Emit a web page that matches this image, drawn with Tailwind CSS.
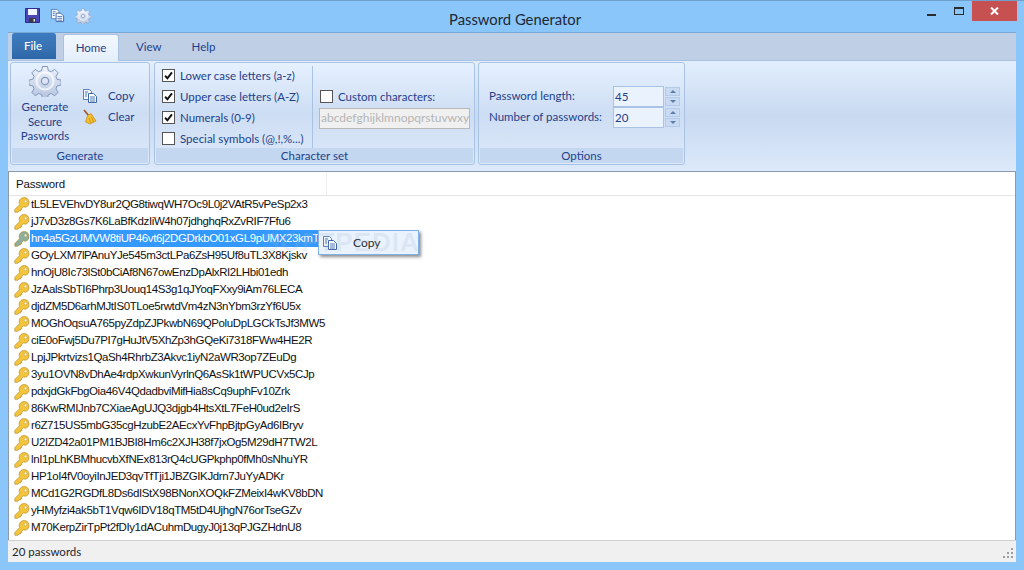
<!DOCTYPE html>
<html lang="en">
<head>
  <meta charset="UTF-8" />
  <title>Password Generator</title>
  <script src="https://cdn.jsdelivr.net/npm/@tailwindcss/browser@4"></script>
</head>
<body class="bg-[#8AC6FA]">
  <svg width="0" height="0" class="absolute">
    <defs>
      <linearGradient id="gearfill" x1="0" y1="0" x2="0" y2="1"><stop offset="0" stop-color="#EEF3FB"/><stop offset="1" stop-color="#B4C3DE"/></linearGradient>
      <symbol id="key" viewBox="0 0 18 18">
        <path d="M11.5 .6a5.6 5.6 0 0 1 1.2 11L10.6 11 8.8 12.8 8.9 14.2 7.4 14.2 7.2 15.8 5.6 15.7 4.4 17.2 1 17.2 .8 14.2 6.3 8.6A5.6 5.6 0 0 1 11.5 .6Z" fill="currentColor" stroke="#A9780F" stroke-opacity=".75" stroke-width=".8"/>
        <circle cx="13" cy="5" r="1.5" fill="#fff" fill-opacity=".85" stroke="#A9780F" stroke-opacity=".6" stroke-width=".6"/>
      </symbol>
      <symbol id="copy" viewBox="0 0 16 16">
        <path d="M1.5 1.5h6l2 2v8h-8z" fill="#F4F8FE" stroke="#5A7FB5"/>
        <path d="M6.5 5.5h5l3 3v6h-8z" fill="#FBFDFF" stroke="#3F68A8"/>
        <path d="M8 9h5M8 11h5M8 13h5M3 4h3M3 6h2M3 8h2" stroke="#4C78B8"/>
      </symbol>
      <symbol id="gear" viewBox="0 0 32 32">
        <path d="M13.5 1.5h5l.8 4 3 1.2 3.4-2.3 3.5 3.5-2.3 3.4 1.2 3 4 .8v5l-4 .8-1.2 3 2.3 3.4-3.5 3.5-3.4-2.3-3 1.2-.8 4h-5l-.8-4-3-1.2-3.4 2.3-3.5-3.5 2.3-3.4-1.2-3-4-.8v-5l4-.8 1.2-3-2.3-3.4 3.5-3.5 3.4 2.3 3-1.2z" fill="url(#gearfill)" stroke="#8296BE" stroke-width="1"/>
        <circle cx="16" cy="16" r="8.5" fill="none" stroke="#fff" stroke-opacity=".7" stroke-width="2"/>
        <circle cx="16" cy="16" r="3.6" fill="#DCE6F6" stroke="#8296BE" stroke-width="1.2"/>
      </symbol>
      <symbol id="check" viewBox="0 0 13 13">
        <path d="M2.5 6.8 5.2 9.8 10.6 2.8" fill="none" stroke="#111" stroke-width="2.3"/>
      </symbol>
    </defs>
  </svg>

  <div class="relative w-[1024px] h-[570px] overflow-hidden border-t border-[#6F9FCB] bg-[#8AC6FA] font-['Lato',sans-serif]">

    <!-- title bar -->
    <div class="relative flex items-center h-[31px]">
      <div class="flex items-center gap-[10px] pl-[25px] pb-[2px]">
        <svg width="15" height="15" viewBox="0 0 15 15">
          <path d="M.5.5h14v14H.5z" fill="#4A45B4" stroke="#2F2B86"/>
          <path d="M3 1h9v6H3z" fill="#F0F4FC"/>
          <path d="M4 10h7v4.5H4z" fill="#3B3B44"/>
          <path d="M8.5 11h1.5v2.5H8.5z" fill="#EEE"/>
        </svg>
        <svg width="15" height="15"><use href="#copy"/></svg>
        <svg width="16" height="16"><use href="#gear"/></svg>
      </div>
      <div class="absolute left-[449px] top-[8px] text-[14.8px] leading-[20px] text-[#1d2733]">Password Generator</div>
      <div class="ml-auto mr-[7px] flex items-start self-start">
        <div class="w-[9px] h-[2px] bg-[#2B2B2B] mt-[13px] mr-[18px]"></div>
        <div class="w-[10px] h-[8px] border border-t-2 border-[#2B2B2B] mt-[6px] mr-[8px]"></div>
        <div class="flex items-center justify-center w-[45px] h-[20px] bg-[#C75050]">
          <svg width="9" height="8" viewBox="0 0 9 8"><path d="M1 .5 8 7.5M8 .5 1 7.5" stroke="#fff" stroke-width="2"/></svg>
        </div>
      </div>
    </div>

    <!-- ribbon -->
    <div class="mx-[8px] h-[139px] border-t border-[#7AA8D6] bg-[#BFD0E6]">
      <div class="flex items-end h-[27px] pl-[4px] text-[11.5px] text-[#1F3F8C]">
        <div class="flex items-center justify-center w-[44px] h-[26px] mb-[1px] pr-[2px] pb-[1px] rounded-t-[3px] bg-gradient-to-b from-[#3A7BBF] via-[#3A74B4] to-[#2B66A8] font-medium text-white">File</div>
        <div class="flex items-center justify-center w-[56px] h-[27px] ml-[7px] -mb-[1px] rounded-t-[3px] border border-b-0 border-[#A8C2E2] bg-gradient-to-b from-[#F4F8FE] to-[#E3EEFC]">Home</div>
        <div class="flex items-center h-[26px] ml-[17px]">View</div>
        <div class="flex items-center h-[26px] ml-[30px]">Help</div>
      </div>

      <div class="flex h-[111px] pl-[2px] pt-[1px] gap-[4px] border-t border-[#A8C2E2] bg-gradient-to-b from-[#E2EEFD] via-[#C8D9F0] to-[#DCE9FA]">
        <!-- Generate -->
        <div class="flex flex-col w-[140px] h-[103px] rounded-[3px] border border-[#A9C3E4] bg-gradient-to-b from-[#E6F1FF] via-[#CDDDF3] to-[#DDE9FA]">
          <div class="flex flex-1 text-[11.5px] text-[#1F3F8C]">
            <div class="flex flex-col items-center w-[68px] leading-[14.5px]">
              <svg width="32" height="32" class="mt-[2px] mb-[3px]"><use href="#gear"/></svg>
              <span>Generate</span><span>Secure</span><span>Paswords</span>
            </div>
            <div class="flex flex-col gap-[5px] pt-[25px] pl-[3px]">
              <div class="flex items-center gap-[10px] h-[16px]"><svg width="16" height="16"><use href="#copy"/></svg>Copy</div>
              <div class="flex items-center gap-[10px] h-[16px]">
                <svg width="16" height="16" viewBox="0 0 16 16">
                  <path d="M2 1 7 7" stroke="#A8501C" stroke-width="1.6"/>
                  <path d="M5.5 6.5 9 4.5 14 12 8 15 3.5 13z" fill="#F2BE2E" stroke="#C98A12" stroke-width=".7"/>
                  <path d="M7 9 9 14M9.5 8 11.5 13" stroke="#C98A12" stroke-width=".7"/>
                </svg>Clear
              </div>
            </div>
          </div>
          <div class="h-[15px] mx-[1px] mb-[1px] bg-[#C3D8F0] text-center text-[11.5px] leading-[16px] text-[#1F3F8C]">Generate</div>
        </div>

        <!-- Character set -->
        <div class="flex flex-col w-[321px] h-[103px] rounded-[3px] border border-[#A9C3E4] bg-gradient-to-b from-[#E6F1FF] via-[#CDDDF3] to-[#DDE9FA]">
          <div class="flex flex-1 text-[11.5px] text-[#1F3F8C]">
            <div class="flex flex-col gap-[8px] pl-[7px] pt-[6px] w-[157px]">
              <label class="flex items-center gap-[5px] h-[13px] whitespace-nowrap"><span class="shrink-0 w-[13px] h-[13px] bg-white border border-[#555]"><svg width="11" height="11"><use href="#check"/></svg></span>Lower case letters (a-z)</label>
              <label class="flex items-center gap-[5px] h-[13px] whitespace-nowrap"><span class="shrink-0 w-[13px] h-[13px] bg-white border border-[#555]"><svg width="11" height="11"><use href="#check"/></svg></span>Upper case letters (A-Z)</label>
              <label class="flex items-center gap-[5px] h-[13px] whitespace-nowrap"><span class="shrink-0 w-[13px] h-[13px] bg-white border border-[#555]"><svg width="11" height="11"><use href="#check"/></svg></span>Numerals (0-9)</label>
              <label class="flex items-center gap-[5px] h-[13px] whitespace-nowrap"><span class="shrink-0 w-[13px] h-[13px] bg-white border border-[#555]"></span>Special symbols (@,!,%...)</label>
            </div>
            <div class="w-px h-[82px] mt-[3px] bg-[#A9C3E4]"></div>
            <div class="pl-[7px] pt-[27px]">
              <label class="flex items-center gap-[5px] h-[13px] whitespace-nowrap"><span class="shrink-0 w-[13px] h-[13px] bg-white border border-[#555]"></span>Custom characters:</label>
              <div class="-ml-px w-[151px] h-[21px] mt-[5px] px-[1px] overflow-hidden whitespace-nowrap border border-[#B8B8B8] bg-[#F0F0F0] text-[12px] leading-[18px] text-[#B5B5B5]">abcdefghijklmnopqrstuvwxyz</div>
            </div>
          </div>
          <div class="h-[15px] mx-[1px] mb-[1px] bg-[#C3D8F0] text-center text-[11.5px] leading-[16px] text-[#1F3F8C]">Character set</div>
        </div>

        <!-- Options -->
        <div class="-ml-px flex flex-col w-[207px] h-[103px] rounded-[3px] border border-[#A9C3E4] bg-gradient-to-b from-[#E6F1FF] via-[#CDDDF3] to-[#DDE9FA]">
          <div class="flex flex-1 flex-col pt-[23px] pl-[10px] text-[11.5px] text-[#1F3F8C]">
            <div class="flex items-center h-[21px]">
              <span class="w-[124px] pb-[2px]">Password length:</span>
              <span class="w-[51px] h-[21px] pl-[1px] border border-[#A9C3E4] bg-[#EAF2FD] leading-[19px]">45</span>
              <span class="flex flex-col gap-px ml-[1px]">
                <span class="flex items-center justify-center w-[15px] h-[9px] bg-[#C9DBF2] border border-[#B3CAE8]"><span class="border-x-[3px] border-x-transparent border-b-[3px] border-b-[#5E7EA8]"></span></span>
                <span class="flex items-center justify-center w-[15px] h-[9px] bg-[#C9DBF2] border border-[#B3CAE8]"><span class="border-x-[3px] border-x-transparent border-t-[3px] border-t-[#5E7EA8]"></span></span>
              </span>
            </div>
            <div class="flex items-center h-[21px]">
              <span class="w-[124px] pb-[2px] whitespace-nowrap">Number of passwords:</span>
              <span class="w-[51px] h-[21px] pl-[1px] border border-[#A9C3E4] bg-[#EAF2FD] leading-[19px]">20</span>
              <span class="flex flex-col gap-px ml-[1px]">
                <span class="flex items-center justify-center w-[15px] h-[9px] bg-[#C9DBF2] border border-[#B3CAE8]"><span class="border-x-[3px] border-x-transparent border-b-[3px] border-b-[#5E7EA8]"></span></span>
                <span class="flex items-center justify-center w-[15px] h-[9px] bg-[#C9DBF2] border border-[#B3CAE8]"><span class="border-x-[3px] border-x-transparent border-t-[3px] border-t-[#5E7EA8]"></span></span>
              </span>
            </div>
          </div>
          <div class="h-[15px] mx-[1px] mb-[1px] bg-[#C3D8F0] text-center text-[11.5px] leading-[16px] text-[#1F3F8C]">Options</div>
        </div>
      </div>
    </div>

    <!-- list -->
    <div class="mx-[8px] h-[369px] border-t border-x border-[#8C9BAB] bg-white font-['Liberation_Sans',sans-serif] text-[11.5px] text-[#111]">
      <div class="flex items-center h-[24px] border-b border-[#E5E5E5]">
        <span class="w-[318px] h-full pl-[7px] border-r border-[#EEEEEE] leading-[24px] tracking-[-0.2px]">Password</span>
      </div>
      <div id="rows"></div>
    </div>

    <!-- status bar -->
    <div class="relative flex items-center mx-[8px] h-[22px] border-t border-[#CFCFCF] bg-[#F0F0F0] pl-[4px] text-[11.5px] text-[#1d2733]">
      20 passwords
      <svg width="11" height="11" class="absolute right-[2px] bottom-[3px]" fill="#9A9FA6">
        <path d="M8 0h2v2H8zM4 4h2v2H4zM8 4h2v2H8zM0 8h2v2H0zM4 8h2v2H4zM8 8h2v2H8z"/>
      </svg>
    </div>

    <!-- context menu -->
    <div class="absolute left-[318px] top-[229px] flex items-center w-[101px] h-[25px] border border-[#7FB2EA] bg-[#EAF2FD] pl-[3px] shadow-[2px_2px_3px_rgba(0,0,0,0.45)] text-[12px] text-[#1d2733]">
      <svg width="16" height="16"><use href="#copy"/></svg>
      <span class="ml-[15px]">Copy</span>
    </div>
    <div class="absolute left-[262px] top-[226px] text-[26px] leading-[30px] font-bold tracking-[1px] text-[#9DB4CE]/20 font-['Liberation_Sans',sans-serif] pointer-events-none">SOFTPEDIA</div>
  </div>

  <script>
    const passwords = [
      'tL5LEVEhvDY8ur2QG8tiwqWH7Oc9L0j2VAtR5vPeSp2x3',
      'jJ7vD3z8Gs7K6LaBfKdzIiW4h07jdhghqRxZvRIF7Ffu6',
      'hn4a5GzUMVW8tiUP46vt6j2DGDrkbO01xGL9pUMX23kmT',
      'GOyLXM7lPAnuYJe545m3ctLPa6ZsH95Uf8uTL3X8Kjskv',
      'hnOjU8Ic73lSt0bCiAf8N67owEnzDpAlxRI2LHbi01edh',
      'JzAalsSbTI6Phrp3Uouq14S3g1qJYoqFXxy9iAm76LECA',
      'djdZM5D6arhMJtIS0TLoe5rwtdVm4zN3nYbm3rzYf6U5x',
      'MOGhOqsuA765pyZdpZJPkwbN69QPoluDpLGCkTsJf3MW5',
      'ciE0oFwj5Du7PI7gHuJtV5XhZp3hGQeKi7318FWw4HE2R',
      'LpjJPkrtvizs1QaSh4RhrbZ3Akvc1iyN2aWR3op7ZEuDg',
      '3yu1OVN8vDhAe4rdpXwkunVyrlnQ6AsSk1tWPUCVx5CJp',
      'pdxjdGkFbgOia46V4QdadbviMifHia8sCq9uphFv10Zrk',
      '86KwRMIJnb7CXiaeAgUJQ3djgb4HtsXtL7FeH0ud2eIrS',
      'r6Z715US5mbG35cgHzubE2AEcxYvFhpBjtpGyAd6IBryv',
      'U2IZD42a01PM1BJBI8Hm6c2XJH38f7jxOg5M29dH7TW2L',
      'lnI1pLhKBMhucvbXfNEx813rQ4cUGPkphp0fMh0sNhuYR',
      'HP1oI4fV0oyiInJED3qvTfTji1JBZGIKJdrn7JuYyADKr',
      'MCd1G2RGDfL8Ds6dIStX98BNonXOQkFZMeixI4wKV8bDN',
      'yHMyfzi4ak5bT1Vqw6IDV18qTM5tD4UjhgN76orTseGZv',
      'M70KerpZirTpPt2fDIy1dACuhmDugyJ0j13qPJGZHdnU8'
    ];

    document.getElementById('rows').innerHTML = passwords.map((p, i) => `
      <div class="flex items-center h-[17px] pl-[5px]">
        <svg width="16" height="16" class="${i === 2 ? 'text-[#8FAF9C]' : 'text-[#F2C53D]'}"><use href="#key"/></svg>
        <span class="pl-[1px] w-[288px] whitespace-nowrap tracking-[-0.4px] ${i === 2 ? 'bg-[#3399FF] text-white' : ''}">${p}</span>
      </div>`).join('');
  </script>
</body>
</html>
